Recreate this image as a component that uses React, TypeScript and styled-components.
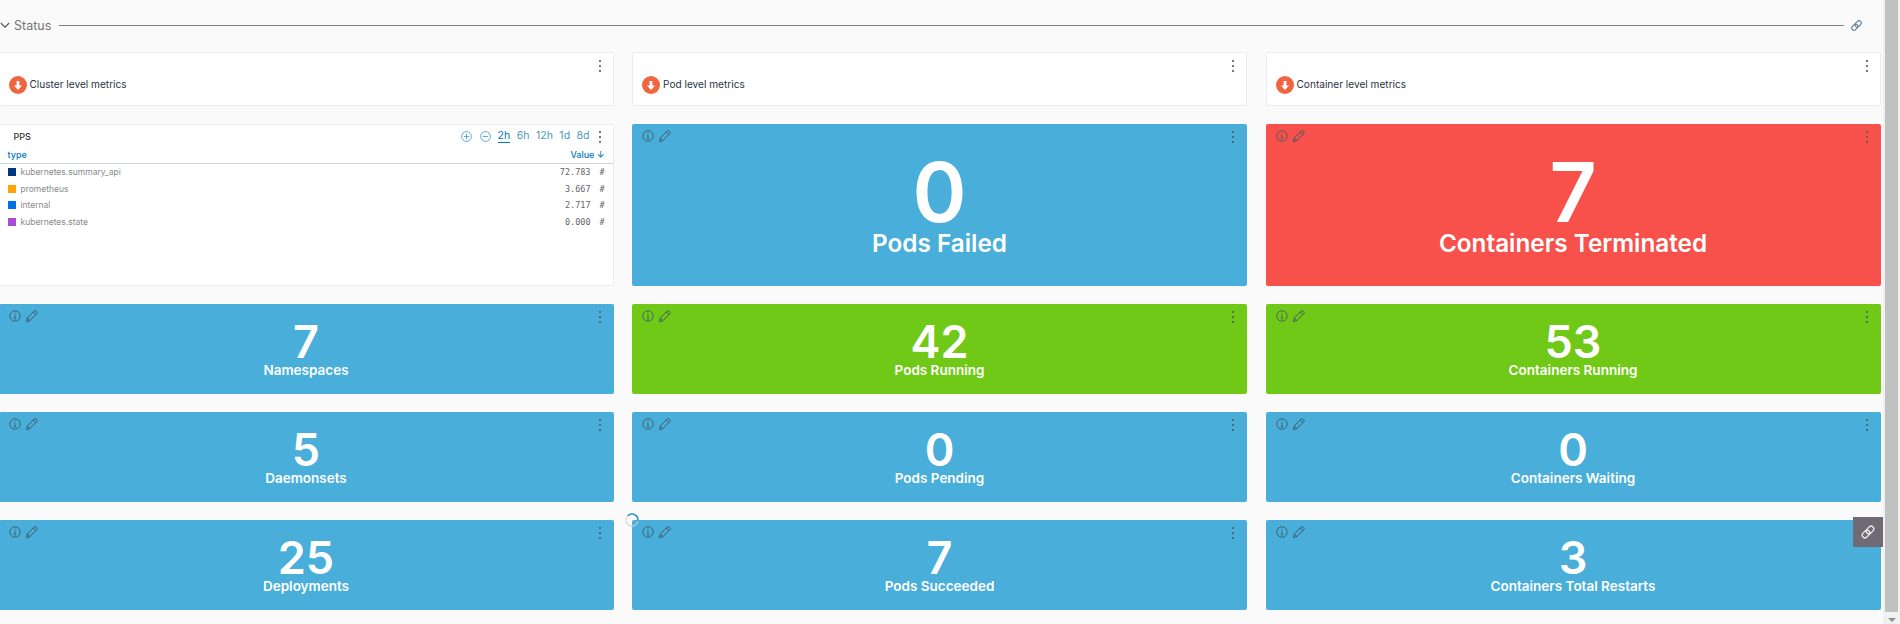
import React from 'react';
import styled, { createGlobalStyle } from 'styled-components';

const GlobalStyle = createGlobalStyle`
  html, body {
    margin: 0;
    padding: 0;
    height: 100%;
    overflow: hidden;
    background: #fafafa;
    font-family: Inter, "Liberation Sans", sans-serif;
  }
`;

const Page = styled.div`
  display: flex;
  width: 1900px;
  height: 624px;
  overflow: hidden;
  position: relative;
`;

const Main = styled.main`
  flex: 1;
  min-width: 0;
  overflow: hidden;
  background: #fafafa;
`;

const ScrollTrack = styled.aside`
  width: 17px;
  flex: none;
  background: #f1f1f1;
  display: flex;
  flex-direction: column;
  align-items: center;
`;

const ScrollThumb = styled.div`
  width: 13px;
  height: 612px;
  background: #c1c1c1;
`;

const ScrollArrow = styled.div`
  margin-top: 6px;
  width: 0;
  height: 0;
  border-left: 4px solid transparent;
  border-right: 4px solid transparent;
  border-top: 4px solid #8f8f8f;
`;

const SectionHeader = styled.div`
  display: flex;
  align-items: center;
  height: 50px;
  padding-right: 20px;
  color: #5f7a8c;
`;

const SectionTitle = styled.span`
  margin-left: 4px;
  font-size: 12.5px;
  color: #747474;
`;

const SectionLine = styled.div`
  flex: 1;
  height: 1px;
  background: #808080;
  margin: 1px 6px 0 8px;
`;

const Grid = styled.div`
  display: grid;
  grid-template-columns: repeat(3, 615px);
  grid-template-rows: 54px 162px 90px 90px 90px;
  column-gap: 18.5px;
  row-gap: 18px;
  margin: 2px 0 0 -1.5px;
  width: 1900px;
`;

const MetricCard = styled.div`
  position: relative;
  height: 54px;
  box-sizing: border-box;
  background: #fff;
  border: 1px solid #e8edf1;
  border-radius: 2px;
  display: flex;
  align-items: flex-end;
  padding: 0 0 11px 9px;
`;

const DownBadge = styled.span`
  width: 18px;
  height: 18px;
  border-radius: 50%;
  background: #f0653f;
  display: flex;
  align-items: center;
  justify-content: center;
  flex: none;
`;

const MetricLabel = styled.span`
  margin-left: 3px;
  margin-bottom: 3px;
  font-size: 10.1px;
  line-height: 13px;
  color: #2b3440;
`;

const CornerMenu = styled.span<{ $top?: number }>`
  position: absolute;
  right: 11px;
  top: ${(p) => p.$top ?? 6}px;
  display: flex;
`;

const TileMenu = styled(CornerMenu)`
  right: 12px;
`;

const Tile = styled.div<{ $color: string }>`
  position: relative;
  background: ${(p) => p.$color};
  border-radius: 2px;
  display: flex;
  flex-direction: column;
  align-items: center;
  color: #fff;
`;

const TileTools = styled.div`
  position: absolute;
  left: 9px;
  top: 5px;
  display: flex;
  align-items: center;
  gap: 3px;
  color: #3f5a68;
`;

const TileValue = styled.div<{ $big?: boolean }>`
  font-weight: 600;
  font-size: ${(p) => (p.$big ? 82 : 45)}px;
  line-height: ${(p) => (p.$big ? 70 : 40)}px;
  margin-top: ${(p) => (p.$big ? 34 : 18)}px;
`;

const TileLabel = styled.div<{ $big?: boolean }>`
  font-weight: 600;
  font-size: ${(p) => (p.$big ? 24.3 : 13.5)}px;
  line-height: ${(p) => (p.$big ? 28 : 16)}px;
  margin-top: ${(p) => (p.$big ? 1 : 0)}px;
`;

const ChartCard = styled.div`
  position: relative;
  background: #fff;
  border: 1px solid #e8edf1;
  border-radius: 2px;
  box-sizing: border-box;
  display: flex;
  flex-direction: column;
`;

const ChartTop = styled.div`
  display: flex;
  align-items: center;
  height: 20px;
  padding: 1px 23px 0 14px;
`;

const ChartTitle = styled.span`
  flex: 1;
  font-size: 9px;
  font-weight: 500;
  color: #333;
`;

const RangeButtons = styled.div`
  display: flex;
  align-items: center;
  gap: 6.5px;
`;

const ZoomIcons = styled.div`
  display: flex;
  gap: 8px;
  margin-right: 0;
`;

const RangeButton = styled.span<{ $active?: boolean }>`
  font-size: 10.5px;
  line-height: 13px;
  color: ${(p) => (p.$active ? '#0079b8' : '#4d97bd')};
  border-bottom: 1px solid ${(p) => (p.$active ? '#0079b8' : 'transparent')};
`;

const TableHead = styled.div`
  display: flex;
  justify-content: space-between;
  align-items: center;
  height: 17px;
  padding: 0 8px 0 8px;
  border-bottom: 1px solid #ccd6db;
  font-size: 9px;
  font-weight: 500;
  color: #0079b8;
`;

const TableBody = styled.div`
  display: flex;
  flex-direction: column;
`;

const TableRow = styled.div`
  display: flex;
  align-items: center;
  height: 16.6px;
  padding: 0 8px 0 8px;
`;

const Swatch = styled.span<{ $color: string }>`
  width: 8px;
  height: 8px;
  background: ${(p) => p.$color};
  margin-right: 5px;
  flex: none;
`;

const SeriesName = styled.span`
  flex: 1;
  font-size: 8.5px;
  color: #8a8a8a;
`;

const SeriesValue = styled.span`
  font-family: "DejaVu Sans Mono", "Liberation Mono", monospace;
  font-size: 8.5px;
  color: #666;
`;

const SeriesUnit = styled.span`
  width: 14px;
  text-align: right;
  font-family: "DejaVu Sans Mono", "Liberation Mono", monospace;
  font-size: 8.5px;
  color: #666;
`;

const Spinner = styled.svg`
  position: absolute;
  left: 625px;
  top: 513px;
`;

const LinkButton = styled.div`
  position: absolute;
  left: 1853px;
  top: 517px;
  width: 30px;
  height: 30px;
  background: #6f6a73;
  color: #eee;
  display: flex;
  align-items: center;
  justify-content: center;
`;

const Kebab = () => (
  <svg width="4" height="14" viewBox="0 0 4 14" fill="#4c5a62">
    <circle cx="2" cy="2" r="1.1" />
    <circle cx="2" cy="7" r="1.1" />
    <circle cx="2" cy="12" r="1.1" />
  </svg>
);

const InfoIcon = () => (
  <svg width="14" height="14" viewBox="0 0 14 14" fill="none" stroke="currentColor" strokeWidth="0.9">
    <circle cx="7" cy="7" r="5.2" />
    <path d="M7 6.2v3.4M5.8 9.7h2.4M6.4 6.2h.6" />
    <circle cx="7" cy="4.3" r="0.5" fill="currentColor" stroke="none" />
  </svg>
);

const PencilIcon = () => (
  <svg width="14" height="14" viewBox="0 0 14 14" fill="none" stroke="currentColor" strokeWidth="1" strokeLinejoin="round">
    <path d="M1.500 12.700l.8-3.700 6.900-7c.5-.5 1.300-.5 1.800 0l.8.8c.5.5.5 1.300 0 1.800l-6.900 7z" />
    <path d="M8.300 3l2.800 2.800M2.300 9l2.800 2.800" />
  </svg>
);

const LinkIcon = ({ size = 16 }: { size?: number }) => (
  <svg width={size} height={size} viewBox="0 0 14 14" fill="none" stroke="currentColor" strokeWidth="1.100">
    <g transform="rotate(-45 7 7)">
      <rect x="0.800" y="4.600" width="7.400" height="4.800" rx="2.400" />
      <rect x="5.800" y="4.600" width="7.400" height="4.800" rx="2.400" />
    </g>
  </svg>
);

const RoundIcon = ({ plus }: { plus?: boolean }) => (
  <svg width="11" height="11" viewBox="0 0 11 11" fill="none" stroke="#4aa3d0" strokeWidth="0.9">
    <circle cx="5.500" cy="5.500" r="4.900" />
    <path d="M2.800 5.500h5.400" />
    {plus && <path d="M5.500 2.800v5.400" />}
  </svg>
);

const Chevron = () => (
  <svg width="10" height="10" viewBox="0 0 10 10" fill="none" stroke="#555" strokeWidth="1.100">
    <path d="M.8 3L5 7.200 9.200 3" />
  </svg>
);

const ArrowDown = () => (
  <svg width="10" height="11" viewBox="0 0 10 11" fill="#fff">
    <path d="M3.600 1h2.800v4.600H9L5 10 1 5.600h2.600z" />
  </svg>
);

const blue = '#49aed9';
const red = '#f8514b';
const green = '#71c917';

const metricCards = ['Cluster level metrics', 'Pod level metrics', 'Container level metrics'];

const series = [
  { name: 'kubernetes.summary_api', value: '72.783', color: '#00377f' },
  { name: 'prometheus', value: '3.667', color: '#ffa500' },
  { name: 'internal', value: '2.717', color: '#0072e6' },
  { name: 'kubernetes.state', value: '0.000', color: '#a94fd4' },
];

const ranges = ['2h', '6h', '12h', '1d', '8d'];

interface TileData {
  value: string;
  label: string;
  color: string;
  big?: boolean;
}

const bigTiles: TileData[] = [
  { value: '0', label: 'Pods Failed', color: blue, big: true },
  { value: '7', label: 'Containers Terminated', color: red, big: true },
];

const smallTiles: TileData[] = [
  { value: '7', label: 'Namespaces', color: blue },
  { value: '42', label: 'Pods Running', color: green },
  { value: '53', label: 'Containers Running', color: green },
  { value: '5', label: 'Daemonsets', color: blue },
  { value: '0', label: 'Pods Pending', color: blue },
  { value: '0', label: 'Containers Waiting', color: blue },
  { value: '25', label: 'Deployments', color: blue },
  { value: '7', label: 'Pods Succeeded', color: blue },
  { value: '3', label: 'Containers Total Restarts', color: blue },
];

const StatTile = ({ value, label, color, big }: TileData) => (
  <Tile $color={color}>
    <TileTools>
      <InfoIcon />
      <PencilIcon />
    </TileTools>
    <TileMenu $top={6}>
      <Kebab />
    </TileMenu>
    <TileValue $big={big}>{value}</TileValue>
    <TileLabel $big={big}>{label}</TileLabel>
  </Tile>
);

const App: React.FC = () => {
  return (
    <Page>
      <GlobalStyle />
      <Main>
        <SectionHeader>
          <Chevron />
          <SectionTitle>Status</SectionTitle>
          <SectionLine />
          <LinkIcon size={13} />
        </SectionHeader>
        <Grid>
          {metricCards.map((title) => (
            <MetricCard key={title}>
              <DownBadge>
                <ArrowDown />
              </DownBadge>
              <MetricLabel>{title}</MetricLabel>
              <CornerMenu>
                <Kebab />
              </CornerMenu>
            </MetricCard>
          ))}
          <ChartCard>
            <ChartTop>
              <ChartTitle>PPS</ChartTitle>
              <RangeButtons>
                <ZoomIcons>
                  <RoundIcon plus />
                  <RoundIcon />
                </ZoomIcons>
                {ranges.map((r) => (
                  <RangeButton key={r} $active={r === '2h'}>
                    {r}
                  </RangeButton>
                ))}
              </RangeButtons>
              <CornerMenu $top={5}>
                <Kebab />
              </CornerMenu>
            </ChartTop>
            <TableHead>
              <span>type</span>
              <span>Value ↓</span>
            </TableHead>
            <TableBody>
              {series.map((s) => (
                <TableRow key={s.name}>
                  <Swatch $color={s.color} />
                  <SeriesName>{s.name}</SeriesName>
                  <SeriesValue>{s.value}</SeriesValue>
                  <SeriesUnit>#</SeriesUnit>
                </TableRow>
              ))}
            </TableBody>
          </ChartCard>
          {bigTiles.map((t) => (
            <StatTile key={t.label} {...t} />
          ))}
          {smallTiles.map((t) => (
            <StatTile key={t.label} {...t} />
          ))}
        </Grid>
      </Main>
      <ScrollTrack>
        <ScrollThumb />
        <ScrollArrow />
      </ScrollTrack>
      <Spinner width="14" height="14" viewBox="0 0 14 14" fill="none" strokeWidth="1.300">
        <circle cx="7" cy="7" r="6" stroke="#c5d3dc" strokeOpacity="0.8" />
        <path d="M2.760 2.760A6 6 0 0 1 12.900 8" stroke="#1f8fcb" />
      </Spinner>
      <LinkButton>
        <LinkIcon />
      </LinkButton>
    </Page>
  );
};

export default App;
